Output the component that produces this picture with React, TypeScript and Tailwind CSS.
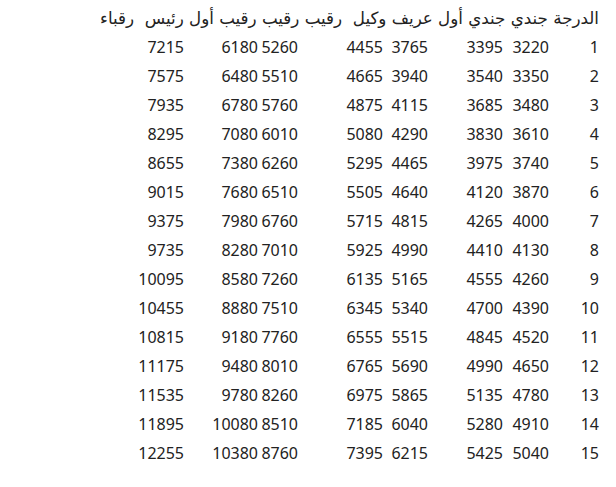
import React from "react";

const header = "الدرجة جندي جندي أول عريف وكيل  رقيب رقيب رقيب أول رئيس  رقباء";

const cols: number[][] = [
  [3220, 3350, 3480, 3610, 3740, 3870, 4000, 4130, 4260, 4390, 4520, 4650, 4780, 4910, 5040],
  [3395, 3540, 3685, 3830, 3975, 4120, 4265, 4410, 4555, 4700, 4845, 4990, 5135, 5280, 5425],
  [3765, 3940, 4115, 4290, 4465, 4640, 4815, 4990, 5165, 5340, 5515, 5690, 5865, 6040, 6215],
  [4455, 4665, 4875, 5080, 5295, 5505, 5715, 5925, 6135, 6345, 6555, 6765, 6975, 7185, 7395],
  [5260, 5510, 5760, 6010, 6260, 6510, 6760, 7010, 7260, 7510, 7760, 8010, 8260, 8510, 8760],
  [6180, 6480, 6780, 7080, 7380, 7680, 7980, 8280, 8580, 8880, 9180, 9480, 9780, 10080, 10380],
  [7215, 7575, 7935, 8295, 8655, 9015, 9375, 9735, 10095, 10455, 10815, 11175, 11535, 11895, 12255],
];

export default function App() {
  return (
    <div
      className="w-[616px] h-[487px] bg-white text-[#222] overflow-hidden pt-[3px] pr-[15px] flex justify-end"
      style={{ fontFamily: '"Noto Sans", "DejaVu Sans", sans-serif' }}
    >
      <table dir="rtl" className="table-fixed w-[505px] border-separate border-spacing-[2px] text-[16px] self-start">
        <colgroup>
          <col className="w-[48px]" />
          <col className="w-[44px]" />
          <col className="w-[73px]" />
          <col className="w-[43px]" />
          <col className="w-[83px]" />
          <col className="w-[38px]" />
          <col className="w-[72px]" />
          <col className="w-[86px]" />
        </colgroup>
        <tbody>
          <tr>
            <td
              colSpan={8}
              className="p-0 h-[27px] leading-[27px] whitespace-pre text-right text-[16.7px] font-normal"
              style={{ fontFamily: '"DejaVu Sans", sans-serif' }}
            >
              {header}
            </td>
          </tr>
          {Array.from({ length: 15 }, (_, r) => (
            <tr key={r}>
              <td className="p-0 h-[27px] leading-[27px] text-right whitespace-nowrap">{r + 1}</td>
              {cols.map((c, j) => (
                <td key={j} className="p-0 h-[27px] leading-[27px] text-right whitespace-nowrap">
                  {c[r]}
                </td>
              ))}
            </tr>
          ))}
        </tbody>
      </table>
    </div>
  );
}
